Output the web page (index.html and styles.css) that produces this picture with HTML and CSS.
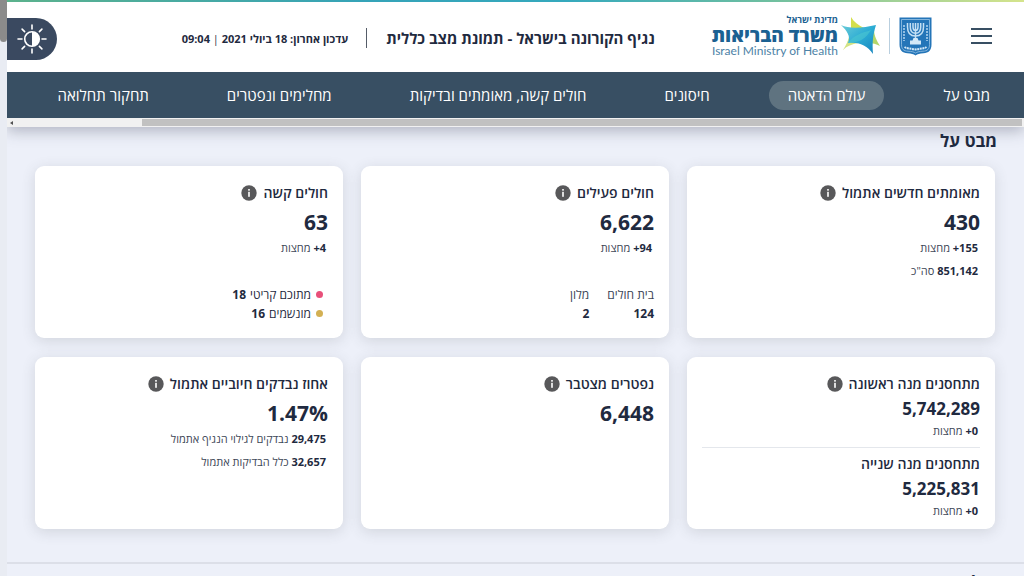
FILE: index.html
```
<!DOCTYPE html>
<html lang="he" dir="rtl">
<head>
    <meta charset="UTF-8">
    <meta name="viewport" content="width=device-width, initial-scale=1.0">
    <title>נגיף הקורונה בישראל - תמונת מצב כללית</title>
    <link rel="stylesheet" href="styles.css">
</head>
<body>
    <svg class="sprite" aria-hidden="true">
        <symbol id="info" viewBox="0 0 16 16">
            <circle cx="8" cy="8" r="7.7" fill="#58585a"/>
            <rect x="7.2" y="4" width="1.6" height="1.7" fill="#fff"/>
            <rect x="7.2" y="6.8" width="1.6" height="5" fill="#fff"/>
        </symbol>
    </svg>
    <div class="app">
        <div class="page">
            <div class="top">
                <header class="header">
                    <button class="menu" aria-label="תפריט"><span></span><span></span><span></span></button>
                    <a class="logo" href="#" aria-label="משרד הבריאות">
                        <svg class="emblem" viewBox="0 0 33 39">
                            <path d="M0.5 0.5h32v27c0 6-3 8.500-8 8.700-4 .2-6 .8-8 2.300-2-1.500-4-2.100-8-2.300-5-.2-8-2.700-8-8.700z" fill="#2475b8"/>
                            <path d="M2.500 2.500h28v25c0 4.500-2 6.500-6.500 6.700-4 .2-6 .8-7.500 1.800-1.500-1-3.500-1.600-7.500-1.800-4.500-.2-6.500-2.200-6.500-6.700z" fill="none" stroke="#9cc5e6" stroke-width=".8"/>
                            <g fill="none" stroke="#c4e0f4" stroke-width="1.500">
                                <path d="M8.500 6v4c0 6 3 9 8 9s8-3 8-9V6"/>
                                <path d="M11.300 6v4c0 4 2 6.300 5.200 6.300s5.200-2.300 5.200-6.300V6"/>
                                <path d="M14 6v4c0 2 1 3.500 2.500 3.500S19 12 19 10V6M16.500 6V22"/>
                            </g>
                            <path d="M14.500 21h4l1 2.500h2.500v4H11v-4h2.500z" fill="#d3e8f7"/>
                            <path d="M5 8v16M28 8v16" stroke="#8fbde2" stroke-width="2" stroke-dasharray="2 1"/>
                            <path d="M5.500 30c3 2 7 1.500 11 2.500 4-1 8-.5 11-2.500" fill="none" stroke="#d3e8f7" stroke-width="2" stroke-dasharray="2 .6"/>
                        </svg>
                        <span class="logo-line"></span>
                        <svg class="star" viewBox="0 0 40 39">
                            <defs>
                                <linearGradient id="blue" x1="0" y1="0" x2="1" y2="1">
                                    <stop offset="0" stop-color="#6bcbd8"/>
                                    <stop offset=".5" stop-color="#2bacd4"/>
                                    <stop offset="1" stop-color="#1682bd"/>
                                </linearGradient>
                            </defs>
                            <path d="M10 0c3 5 7 8 13 11l-13 2z" fill="#d4df4c"/>
                            <path d="M2 33c3-5 5-9 6-13l9 6c-6 1-11 3-15 7z" fill="#d3e384"/>
                            <path d="M33 12c0 7 3 12 6 17-4-2-7-3-12-3z" fill="#b2d66a"/>
                            <path d="M0 8c8 4 22 3 35 0-3 9-4 18-3 29-6-8-12-12-25-11 3-7-1-12-7-18z" fill="url(#blue)"/>
                            <path d="M7 26c5-7 13-10 23-13-5 8-11 13-23 13z" fill="#4cc6d0" opacity=".6"/>
                        </svg>
                        <span class="logo-text">
                            <span class="logo-state">מדינת ישראל</span>
                            <strong class="logo-name">משרד הבריאות</strong>
                            <span class="logo-en" lang="en">Israel Ministry of Health</span>
                        </span>
                    </a>
                    <div class="heading">
                        <h1>נגיף הקורונה בישראל - תמונת מצב כללית</h1>
                        <p class="updated">עדכון אחרון: 18 ביולי 2021 <i>|</i> 09:04</p>
                    </div>
                    <button class="contrast" aria-label="ניגודיות">
                        <svg viewBox="0 0 30 30">
                            <g stroke="#fff" stroke-width="1.600" stroke-linecap="round">
                                <path d="M15 1v4M15 25v4M1 15h4M25 15h4M5.100 5.100l2.500 2.500M22.400 22.400l2.500 2.500M5.100 24.900l2.500-2.500M22.400 7.600l2.500-2.500"/>
                            </g>
                            <circle cx="15" cy="15" r="7.300" fill="none" stroke="#fff" stroke-width="1.600"/>
                            <path d="M15 7.700a7.300 7.300 0 0 1 0 14.600z" fill="#fff"/>
                        </svg>
                    </button>
                </header>
                <nav class="nav">
                    <a href="#">מבט על</a>
                    <a href="#" class="active">עולם הדאטה</a>
                    <a href="#">חיסונים</a>
                    <a href="#">חולים קשה, מאומתים ובדיקות</a>
                    <a href="#">מחלימים ונפטרים</a>
                    <a href="#">תחקור תחלואה</a>
                </nav>
                <div class="nav-scroll">
                    <div class="nav-thumb"></div>
                    <span class="nav-arrow"></span>
                </div>
            </div>

            <main>
                <section class="overview">
                    <h2>מבט על</h2>
                    <div class="cards">
                        <article class="card">
                            <h3>מאומתים חדשים אתמול <button class="info" aria-label="מידע"><svg><use href="#info"/></svg></button></h3>
                            <p class="value">430</p>
                            <p class="sub"><b dir="ltr">+155</b> מחצות</p>
                            <p class="sub"><b>851,142</b> סה"כ</p>
                        </article>
                        <article class="card">
                            <h3>חולים פעילים <button class="info" aria-label="מידע"><svg><use href="#info"/></svg></button></h3>
                            <p class="value">6,622</p>
                            <p class="sub"><b dir="ltr">+94</b> מחצות</p>
                            <dl class="split">
                                <div><dt>בית חולים</dt><dd>124</dd></div>
                                <div><dt>מלון</dt><dd>2</dd></div>
                            </dl>
                        </article>
                        <article class="card">
                            <h3>חולים קשה <button class="info" aria-label="מידע"><svg><use href="#info"/></svg></button></h3>
                            <p class="value">63</p>
                            <p class="sub"><b dir="ltr">+4</b> מחצות</p>
                            <ul class="legend">
                                <li class="critical">מתוכם קריטי <b>18</b></li>
                                <li class="ventilated">מונשמים <b>16</b></li>
                            </ul>
                        </article>
                        <article class="card double">
                            <div class="dose">
                                <h3>מתחסנים מנה ראשונה <button class="info" aria-label="מידע"><svg><use href="#info"/></svg></button></h3>
                                <p class="value">5,742,289</p>
                                <p class="sub"><b dir="ltr">+0</b> מחצות</p>
                            </div>
                            <div class="dose">
                                <h3>מתחסנים מנה שנייה</h3>
                                <p class="value">5,225,831</p>
                                <p class="sub"><b dir="ltr">+0</b> מחצות</p>
                            </div>
                        </article>
                        <article class="card">
                            <h3>נפטרים מצטבר <button class="info" aria-label="מידע"><svg><use href="#info"/></svg></button></h3>
                            <p class="value">6,448</p>
                        </article>
                        <article class="card">
                            <h3>אחוז נבדקים חיוביים אתמול <button class="info" aria-label="מידע"><svg><use href="#info"/></svg></button></h3>
                            <p class="value"><bdi dir="ltr">1.47%</bdi></p>
                            <p class="sub"><b>29,475</b> נבדקים לגילוי הנגיף אתמול</p>
                            <p class="sub"><b>32,657</b> כלל הבדיקות אתמול</p>
                        </article>
                    </div>
                </section>
                <section class="next">
                    <h2>חולים קשה</h2>
                </section>
            </main>
        </div>
        <div class="rail"><div class="rail-thumb"></div></div>
    </div>
</body>
</html>
```

FILE: styles.css
```
* {
    box-sizing: border-box;
}
body {
    margin: 0;
    background-color: #edf0f9;
    color: #1f2a40;
    font-family: "Open Sans", "Noto Sans", "DejaVu Sans", sans-serif;
    font-size: 12px;
}
h1, h2, h3, p, dl, dd, ul {
    margin: 0;
    padding: 0;
}
a {
    color: inherit;
    text-decoration: none;
}
button {
    border: none;
    padding: 0;
    background: none;
    cursor: pointer;
}
.sprite {
    display: none;
}
.app {
    display: flex;
    height: 100vh;
    overflow: hidden;
}
.page {
    flex: 1;
    min-width: 0;
}
.rail {
    width: 7px;
    background-color: #e9ecf3;
}
.rail-thumb {
    height: 42px;
    border-radius: 0 0 4px 4px;
    background-color: #8b8b8b;
}

/* header */
.top {
    box-shadow: 0 4px 14px rgba(60, 65, 90, 0.35);
}
.header {
    display: flex;
    align-items: center;
    height: 72px;
    padding-right: 32px;
    background: linear-gradient(to right, #5cb28c, #35a3b8 35%, #35a9bd 55%, #6fbfa0 75%, #d5e48c) top / 100% 2px no-repeat #fff;
}
.menu {
    display: flex;
    flex-direction: column;
    gap: 5px;
    width: 21px;
}
.menu span {
    height: 2px;
    background-color: #384f63;
}
.logo {
    display: flex;
    align-items: center;
    margin-right: 39px;
}
.emblem {
    width: 33px;
    height: 39px;
}
.logo-line {
    width: 1px;
    height: 36px;
    margin: 0 9px 0 8px;
    background-color: #b9cfdf;
}
.star {
    width: 40px;
    height: 39px;
}
.logo-text {
    display: flex;
    flex-direction: column;
    margin-right: 3px;
    color: #1b6192;
}
.logo-state {
    font-size: 9px;
    font-weight: 700;
    line-height: 12px;
}
.logo-name {
    font-size: 19px;
    font-weight: 800;
    line-height: 18px;
}
.logo-en {
    color: #4d82a6;
    font-family: Lato, "Open Sans", sans-serif;
    font-size: 12px;
    line-height: 14px;
}
.heading {
    display: flex;
    align-items: center;
    margin-top: 4px;
    margin-right: 57px;
}
.heading h1 {
    padding-left: 19px;
    border-left: 1px solid #555c68;
    font-size: 15px;
    font-weight: 700;
    line-height: 20px;
}
.updated {
    padding-right: 18px;
    font-size: 11px;
    font-weight: 700;
}
.updated i {
    font-style: normal;
    font-weight: 400;
}
.contrast {
    display: flex;
    align-items: center;
    justify-content: center;
    width: 50px;
    height: 42px;
    margin-top: 6px;
    margin-right: auto;
    border-radius: 0 21px 21px 0;
    background-color: #3a4960;
}
.contrast svg {
    width: 30px;
    height: 30px;
}

/* navigation */
.nav {
    display: flex;
    align-items: center;
    gap: 40px;
    height: 46px;
    padding: 0 15px;
    background-color: #384f63;
    color: #fff;
    font-size: 15px;
}
.nav a {
    padding: 0 19px;
    border-radius: 15px;
    line-height: 29px;
    white-space: nowrap;
}
.nav .active {
    background-color: #5f7380;
}
.nav-scroll {
    display: flex;
    align-items: center;
    justify-content: space-between;
    height: 9px;
    padding: 0 2px 0 3px;
    background-color: #f1f1f1;
}
.nav-thumb {
    width: 87%;
    height: 7px;
    background-color: #c1c1c1;
}
.nav-arrow {
    border: 2px solid transparent;
    border-left: none;
    border-right: 3px solid #505050;
}

/* cards */
h2 {
    font-size: 17px;
    font-weight: 700;
    line-height: 24px;
}
.overview {
    padding: 2px 29px 33px 28px;
    border-bottom: 2px solid #dcdfe8;
}
.overview h2, .next h2 {
    margin-right: -2px;
}
.cards {
    display: grid;
    grid-template-columns: repeat(3, 1fr);
    grid-auto-rows: minmax(172px, auto);
    gap: 19px 18px;
    margin-top: 13px;
}
.card {
    display: flex;
    flex-direction: column;
    padding: 17px 15px 15px;
    border-radius: 9px;
    background-color: #fff;
    box-shadow: 0 3px 14px rgba(70, 72, 80, 0.16);
}
.card h3 {
    display: flex;
    align-items: center;
    gap: 6px;
    font-size: 14px;
    font-weight: 600;
    line-height: 20px;
}
.info, .info svg {
    display: block;
    width: 16px;
    height: 16px;
}
.value {
    margin-top: 6px;
    font-size: 21px;
    font-weight: 700;
    line-height: 27px;
}
.sub {
    padding-right: 2px;
    color: #3c4656;
    font-size: 11px;
    line-height: 23px;
}
.sub b {
    color: #1f2a40;
}
.split {
    display: flex;
    gap: 18px;
    margin-top: auto;
    line-height: 19px;
}
.split dt {
    color: #3c4656;
}
.split dd {
    font-weight: 700;
}
.legend {
    margin-top: auto;
    padding-right: 5px;
    list-style: none;
    line-height: 19px;
}
.legend li {
    display: flex;
    align-items: center;
    gap: 4px;
}
.legend li::before {
    content: "";
    width: 7px;
    height: 7px;
    margin-left: 1px;
    border-radius: 50%;
}
.legend .critical::before {
    background-color: #e8507a;
}
.legend .ventilated::before {
    background-color: #d3b053;
}
.double {
    padding-bottom: 6px;
}
.double .value {
    margin-top: 3px;
    font-size: 17px;
    line-height: 24px;
}
.double .sub {
    line-height: 20px;
}
.dose + .dose {
    margin-top: 6px;
    padding-top: 6px;
    border-top: 1px solid #e4e7ec;
}
.next {
    padding: 6px 29px 20px 28px;
}
```
